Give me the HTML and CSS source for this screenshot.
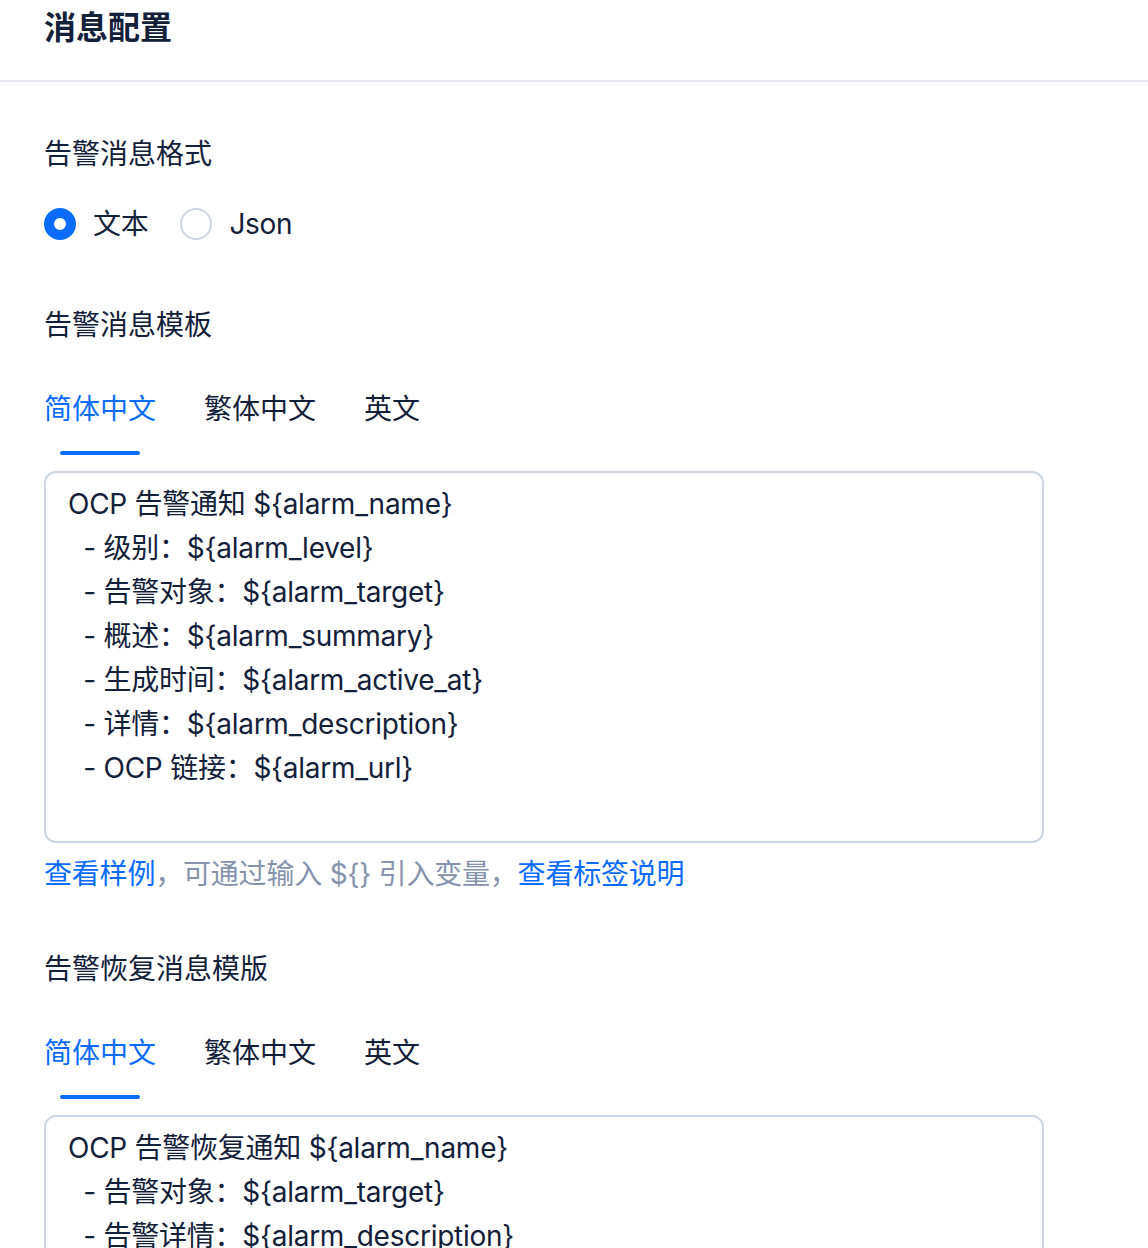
FILE: index.html
```html
<!DOCTYPE html>
<html lang="zh-CN">
<head>
<meta charset="utf-8">
<title>消息配置</title>
<link rel="stylesheet" href="styles.css">
</head>
<body>
<header class="page-header">
  <h1 class="page-title">消息配置</h1>
</header>
<main class="content">
  <section class="field field-format">
    <div class="field-label">告警消息格式</div>
    <div class="radio-group">
      <label class="radio checked"><span class="radio-dot"></span><span class="radio-text">文本</span></label>
      <label class="radio"><span class="radio-dot"></span><span class="radio-text">Json</span></label>
    </div>
  </section>

  <section class="field field-template">
    <div class="field-label">告警消息模板</div>
    <div class="tabs">
      <div class="tab active">简体中文</div>
      <div class="tab">繁体中文</div>
      <div class="tab">英文</div>
    </div>
    <div class="editor">OCP 告警通知 ${alarm_name}
  - 级别：${alarm_level}
  - 告警对象：${alarm_target}
  - 概述：${alarm_summary}
  - 生成时间：${alarm_active_at}
  - 详情：${alarm_description}
  - OCP 链接：${alarm_url}</div>
    <div class="help"><span class="link">查看样例</span>，可通过输入 ${} 引入变量，<span class="link">查看标签说明</span></div>
  </section>

  <section class="field field-recover">
    <div class="field-label">告警恢复消息模版</div>
    <div class="tabs">
      <div class="tab active">简体中文</div>
      <div class="tab">繁体中文</div>
      <div class="tab">英文</div>
    </div>
    <div class="editor">OCP 告警恢复通知 ${alarm_name}
  - 告警对象：${alarm_target}
  - 告警详情：${alarm_description}</div>
  </section>
</main>
</body>
</html>
```

FILE: styles.css
```css
html, body {
  margin: 0;
  padding: 0;
  background: #ffffff;
}
body {
  font-family: "Inter", "Noto Sans CJK SC", sans-serif;
  color: #132039;
  font-size: 28px;
  overflow: hidden;
}
.page-header {
  height: 80px;
  border-bottom: 2px solid #e3e8f0;
  padding: 0 44px;
}
.page-title {
  margin: 0;
  font-size: 32px;
  line-height: 55px;
  font-weight: 700;
  color: #132039;
}
.content {
  padding: 52px 44px 0;
}
.field-label {
  font-size: 28px;
  line-height: 40px;
}
.radio-group {
  display: flex;
  align-items: center;
  gap: 32px;
  margin-top: 30px;
}
.radio {
  display: flex;
  align-items: center;
  gap: 17px;
  line-height: 40px;
}
.radio-text {
  letter-spacing: -0.3px;
}
.radio-dot {
  width: 32px;
  height: 32px;
  box-sizing: border-box;
  border-radius: 50%;
  border: 2px solid #cdd5e4;
  background: #fff;
}
.radio.checked .radio-dot {
  border: 10px solid #0a6cff;
}
.field-template {
  margin-top: 61px;
}
.tabs {
  display: flex;
  gap: 48px;
  margin-top: 44px;
}
.tab {
  line-height: 40px;
  padding-bottom: 26px;
  position: relative;
}
.tab.active {
  color: #0a6cff;
}
.tab.active::after {
  content: "";
  position: absolute;
  left: 50%;
  bottom: 0;
  width: 80px;
  height: 4px;
  margin-left: -40px;
  border-radius: 2px;
  background: #0a6cff;
}
.editor {
  margin-top: 16px;
  width: 1000px;
  height: 372px;
  box-sizing: border-box;
  border: 2px solid #cdd6e5;
  border-radius: 12px;
  padding: 9px 22px 8px;
  font-size: 28px;
  line-height: 44px;
  letter-spacing: -0.25px;
  white-space: pre-wrap;
  color: #132039;
}
.help {
  margin-top: 11px;
  line-height: 40px;
  letter-spacing: -0.2px;
  color: #8592ad;
}
.link {
  color: #0a6cff;
}
.field-recover {
  margin-top: 55px;
}
```
